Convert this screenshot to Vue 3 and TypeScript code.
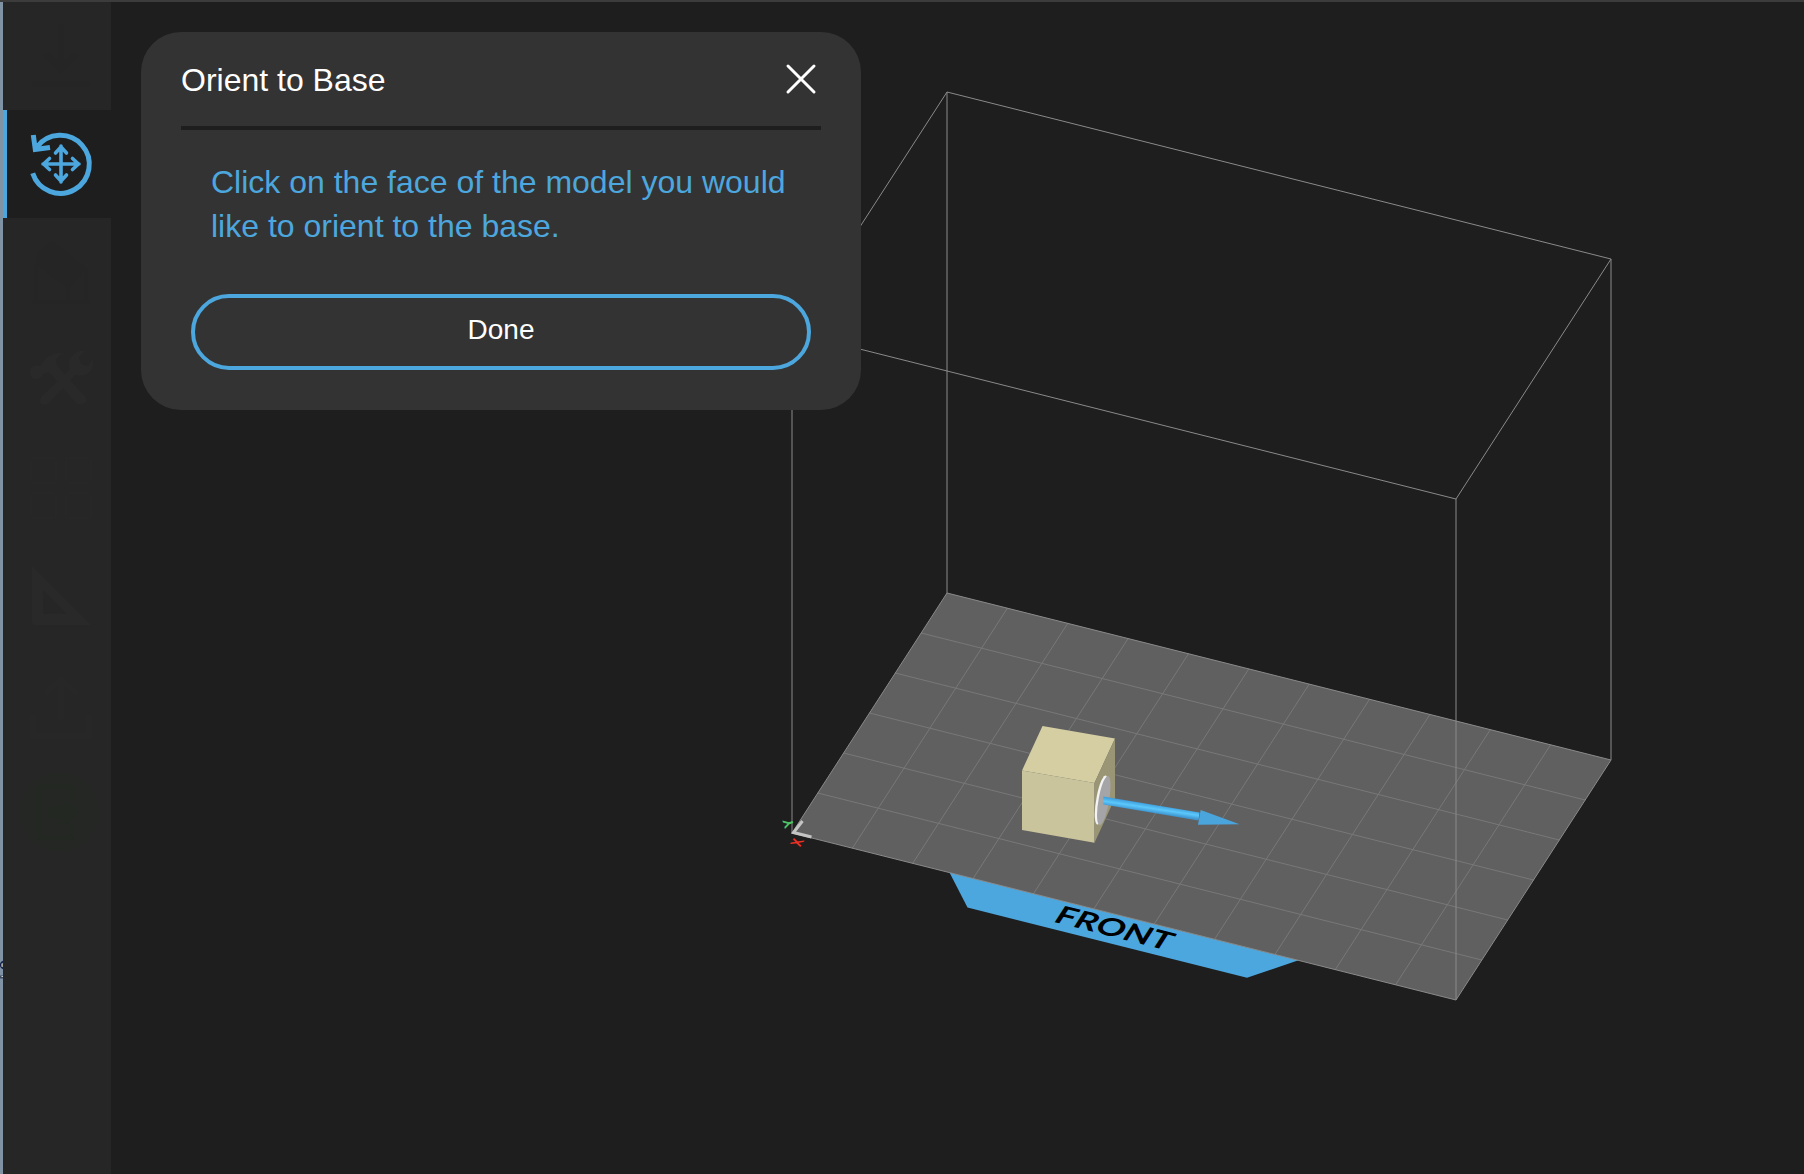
<script setup lang="ts">
import { ref } from 'vue'

interface Point {
  x: number
  y: number
}

interface Tool {
  id: string
  label: string
}

const tools: Tool[] = [
  { id: 'load', label: 'Place on bed' },
  { id: 'orient', label: 'Orient' },
  { id: 'supports', label: 'Supports' },
  { id: 'repair', label: 'Repair' },
  { id: 'layout', label: 'Layout' },
  { id: 'measure', label: 'Measure' },
  { id: 'upload', label: 'Upload' },
  { id: 'export', label: 'Export' },
]

const active = ref('orient')
const open = ref(true)

// Build volume: floor corners, and its height on screen
const left: Point = { x: 792, y: 833 }
const back: Point = { x: 947, y: 593 }
const right: Point = { x: 1611, y: 760 }
const front: Point = { x: 1456, y: 1000 }
const height = 501

const columns = 11
const rows = 6

function mix(a: Point, b: Point, t: number): Point {
  return { x: a.x + (b.x - a.x) * t, y: a.y + (b.y - a.y) * t }
}

function line(a: Point, b: Point): string {
  return `M${a.x.toFixed(1)} ${a.y.toFixed(1)}L${b.x.toFixed(1)} ${b.y.toFixed(1)}`
}

function up(p: Point): Point {
  return { x: p.x, y: p.y - height }
}

function ring(points: Point[]): string {
  return points.map((p) => `${p.x},${p.y}`).join(' ')
}

const grid: string[] = []
for (let i = 1; i < columns; i++) {
  grid.push(line(mix(left, front, i / columns), mix(back, right, i / columns)))
}
for (let j = 1; j < rows; j++) {
  grid.push(line(mix(left, back, j / rows), mix(front, right, j / rows)))
}
const gridPath = grid.join('')

const corners = [left, back, right, front]
const floor = ring(corners)
const ceiling = ring(corners.map(up))
const posts = corners.map((p) => line(p, up(p))).join('')
</script>

<template>
  <div class="app">
    <div class="edge" aria-hidden="true">
      <svg width="3" height="24" viewBox="0 0 3 24">
        <path d="M3 1.5Q.5 3 .5 5T3 8.5" fill="none" stroke="#14204a" stroke-width="1.5" />
        <path d="M2 3.5V7" stroke="#c9b98a" stroke-width="1" />
        <path d="M0 17H3" stroke="#3f4c66" stroke-width="3" />
        <path d="M1.5 16.5H3" stroke="#d8d4c8" stroke-width="1" />
      </svg>
    </div>

    <nav class="sidebar" aria-label="Tools">
      <button
        v-for="tool in tools"
        :key="tool.id"
        type="button"
        class="tool"
        :class="[tool.id, { active: tool.id === active }]"
        :disabled="tool.id !== active"
        :aria-label="tool.label"
      >
        <svg class="icon" viewBox="0 0 64 64" aria-hidden="true">
          <g v-if="tool.id === 'load'" class="stroke" stroke-width="6">
            <path d="M32 0V44M17 30L32 45L47 30M3 60H61" />
          </g>
          <g v-else-if="tool.id === 'orient'" class="stroke">
            <path d="M3.7 41.3A29 29 0 1 0 8 15" stroke-width="5" />
            <path d="M4.3 3L6.3 17.5L21 15.5" stroke-width="5" />
            <path
              d="M32 14V50M14 32H50M26.500 21L32 15L37.500 21M26.500 43L32 49L37.500 43M20.500 26.500L14.500 32L20.500 37.500M43.500 26.500L49.500 32L43.500 37.500"
              stroke-width="3.6"
              stroke-linecap="round"
              stroke-linejoin="round"
            />
          </g>
          <g v-else-if="tool.id === 'supports'">
            <path class="fill" d="M7 14L23 1L57 28L40 49L7 24Z" />
            <path class="stroke" stroke-width="3" d="M3 62H61M7 24V62M39 43V62M57 28V62" />
          </g>
          <g v-else-if="tool.id === 'repair'">
            <path
              class="fill"
              d="M12 17Q20 3 36 5Q26 8 27 16L32 22L57 50Q59 55 53 56L48 56L20 24L14 26Q11 33 5 31Q0 28 1 22Q3 17 9 18Z"
            />
            <path
              class="fill"
              d="M12 49L41 22Q38 13 44 7Q49 2 56 3L50 9L52 16L59 18L64 11Q66 21 58 26Q52 29 46 27L19 56Q15 58 12 56Q10 53 12 49Z"
            />
          </g>
          <g v-else-if="tool.id === 'layout'" class="stroke" stroke-width="2">
            <rect x="2" y="2" width="25" height="25" rx="3" />
            <rect x="37" y="2" width="25" height="25" rx="3" />
            <rect x="2" y="37" width="25" height="25" rx="3" />
            <rect x="37" y="37" width="25" height="25" rx="3" />
          </g>
          <g v-else-if="tool.id === 'measure'">
            <path class="fill" fill-rule="evenodd" d="M3 2L62 61H6Q3 61 3 58ZM14 26V50H38Z" />
          </g>
          <g v-else-if="tool.id === 'upload'" class="stroke" stroke-width="6">
            <path d="M32 47V8M16 22L32 7L48 22M4 43V64H60V43" />
          </g>
          <g v-else>
            <circle cx="30" cy="32" r="40" fill="#252725" />
            <path class="stroke" stroke-width="4" d="M45 20V12Q45 7 40 7H13Q8 7 8 12V53Q8 58 13 58H40Q45 58 45 53V45" />
            <path class="fill" d="M18 26H33V17L51 33L33 47V39H18Z" />
          </g>
        </svg>
      </button>
    </nav>

    <main class="workspace">
      <section v-if="open" class="panel" aria-labelledby="panel-title">
        <header class="panel-head">
          <h1 id="panel-title">Orient to Base</h1>
          <button type="button" class="close" aria-label="Close" @click="open = false">
            <svg viewBox="0 0 32 32" aria-hidden="true">
              <path d="M3 3L29 29M29 3L3 29" />
            </svg>
          </button>
        </header>
        <p class="hint">Click on the face of the model you would like to orient to the base.</p>
        <button type="button" class="done" @click="open = false">Done</button>
      </section>
    </main>

    <svg
      class="scene"
      viewBox="0 0 1804 1174"
      preserveAspectRatio="xMidYMid slice"
      role="img"
      aria-label="Build volume with a cube model"
    >
      <defs>
        <linearGradient id="shaft" gradientUnits="userSpaceOnUse" x1="1150" y1="804" x2="1148.8" y2="812">
          <stop offset="0" stop-color="#3f9fdc" />
          <stop offset=".5" stop-color="#5cc8fb" />
          <stop offset="1" stop-color="#3f98d2" />
        </linearGradient>
      </defs>

      <polygon :points="floor" fill="#606060" />
      <path :d="gridPath" class="grid" />
      <polygon points="949.5,872.5 967.5,907.5 1247,977.7 1298.5,960.3" fill="#4da7df" />
      <polygon :points="floor" class="frame" />
      <polygon :points="ceiling" class="frame" />
      <path :d="posts" class="frame" />
      <text class="front" transform="matrix(1 .2515 -.427 .662 1052 921.5)">FRONT</text>

      <path d="M802.5 821L793.5 832.5L811.5 837" fill="none" stroke="#c4c4c4" stroke-width="3" />
      <text class="axis y" transform="translate(788 823.5) rotate(-107)" text-anchor="middle" y="5">Y</text>
      <text class="axis x" transform="matrix(.427 -.662 1 .2515 797 842.5)" text-anchor="middle" y="5">X</text>

      <polygon points="1022,770.5 1042.5,726 1115,738.5 1094.5,783" fill="#d5cea3" />
      <polygon points="1022,770.5 1094.5,783 1094.5,842.7 1022,830" fill="#c9c49b" />
      <polygon points="1094.5,783 1115,738.5 1115,798 1094.5,842.7" fill="#9a9575" />
      <circle r=".33" transform="matrix(20.5 -44.5 0 59.5 1101.5 800)" fill="#f4f4f4" />
      <circle r=".33" transform="matrix(20.5 -44.5 0 59.5 1103.8 800.5)" fill="#a5a5a8" />
      <polygon points="1103.3,796.5 1199.5,812.5 1198.5,820.5 1103.3,804.5" fill="url(#shaft)" />
      <polygon points="1200.7,810 1239.5,824.3 1198,824.8" fill="#4ba5dd" />
    </svg>
  </div>
</template>

<style>
html,
body {
  background: #1e1e1e;
}
</style>

<style scoped>
.app {
  position: relative;
  display: flex;
  box-sizing: border-box;
  min-height: 100vh;
  border-top: 2px solid #3c3c3c;
  background: #1e1e1e;
  color: #fff;
  font-family: "Liberation Sans", Arial, sans-serif;
  overflow: hidden;
}

.edge {
  display: flex;
  align-items: flex-end;
  width: 3px;
  padding-bottom: 190px;
  box-sizing: border-box;
  background: #7f93a5;
}

.sidebar {
  width: 108px;
  background: #262626;
}

.tool {
  display: flex;
  align-items: center;
  justify-content: center;
  box-sizing: border-box;
  width: 100%;
  height: 108px;
  padding: 0 0 0 4px;
  border: 0;
  border-left: 4px solid transparent;
  background: none;
  color: #272727;
}

.tool.load,
.tool.supports {
  color: #252525;
}

.tool.repair,
.tool.measure {
  color: #292929;
}

.tool.export {
  color: #232823;
}

.tool.active {
  border-left-color: #4da7df;
  background: #1e1e1e;
  color: #4da7df;
}

.icon {
  width: 64px;
  height: 64px;
  overflow: visible;
}

.stroke {
  fill: none;
  stroke: currentColor;
}

.fill {
  fill: currentColor;
}

.workspace {
  position: relative;
  z-index: 1;
  flex: 1;
  padding: 30px;
}

.panel {
  box-sizing: border-box;
  width: 100%;
  max-width: 720px;
  padding: 0 40px 40px;
  border-radius: 40px;
  background: #333;
}

.panel-head {
  display: flex;
  align-items: center;
  justify-content: space-between;
  height: 94px;
  border-bottom: 4px solid #1e1e1e;
}

h1 {
  margin: 0;
  padding-top: 2px;
  font-size: 32px;
  font-weight: 400;
  line-height: 44px;
}

.close {
  width: 40px;
  height: 40px;
  padding: 4px;
  border: 0;
  background: none;
}

.close svg {
  display: block;
  width: 32px;
  height: 32px;
  fill: none;
  stroke: #fff;
  stroke-width: 3;
  stroke-linecap: round;
}

.hint {
  margin: 30px 30px 46px;
  color: #4da7df;
  font-size: 32px;
  line-height: 44px;
}

.done {
  display: block;
  box-sizing: border-box;
  width: calc(100% - 20px);
  height: 76px;
  margin: 0 10px;
  padding: 0 0 4px;
  border: 4px solid #4da7df;
  border-radius: 38px;
  background: none;
  color: #fff;
  font: 28px "Liberation Sans", Arial, sans-serif;
}

.scene {
  position: absolute;
  inset: -2px 0 0;
  width: 100%;
  height: calc(100% + 2px);
  pointer-events: none;
}

.grid {
  fill: none;
  stroke: #787878;
  stroke-width: 1;
}

.frame {
  fill: none;
  stroke: #8a8a8a;
  stroke-width: 1;
}

.front {
  fill: #000;
  font: 700 34px Lato, sans-serif;
}

.axis {
  font-family: "Liberation Sans", Arial, sans-serif;
  font-weight: 700;
}

.y {
  fill: #4dc267;
  font-size: 14px;
}

.x {
  fill: #ee3124;
  font-size: 15px;
}
</style>
